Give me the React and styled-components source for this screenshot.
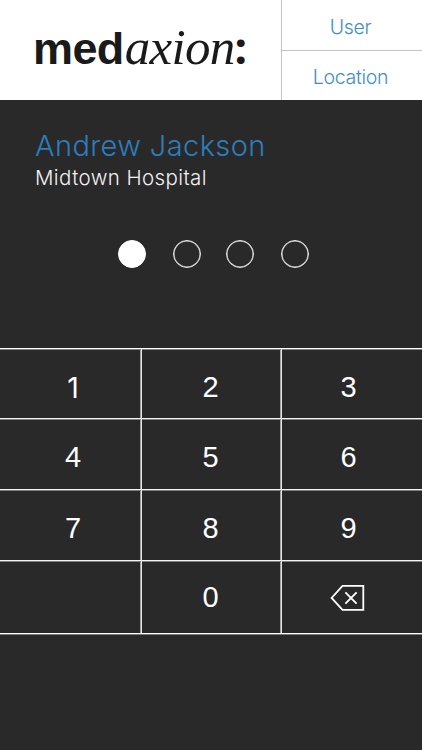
import React from "react";
import styled, { createGlobalStyle } from "styled-components";

const keys = ["1", "2", "3", "4", "5", "6", "7", "8", "9", "", "0", "delete"];

const App = () => {
  return (
    <>
      <GlobalStyle />
      <Screen>
        <Header>
          <Logo>
            <LogoBold>med</LogoBold>
            <LogoItalic>axion</LogoItalic>
            <LogoColon>:</LogoColon>
          </Logo>
          <Nav>
            <NavButton>User</NavButton>
            <NavButton>Location</NavButton>
          </Nav>
        </Header>
        <Profile>
          <Name>Andrew Jackson</Name>
          <Hospital>Midtown Hospital</Hospital>
        </Profile>
        <Pin>
          <Dot $filled />
          <Dot />
          <Dot />
          <Dot />
        </Pin>
        <Keypad>
          {keys.map((key, i) => (
            <Key key={i} aria-label={key || undefined}>
              {key === "delete" ? <DeleteIcon /> : key}
            </Key>
          ))}
        </Keypad>
      </Screen>
    </>
  );
};

export default App;

const DeleteIcon = () => (
  <svg width="36" height="28" viewBox="0 0 36 28" fill="none" stroke="#fff">
    <path d="M12.5 1.9H33.3V25.9H12.5L1.6 13.9Z" strokeWidth="1.8" />
    <path d="M15.4 8.4L26.6 19.6M26.6 8.4L15.4 19.6" strokeWidth="1.9" />
  </svg>
);

const GlobalStyle = createGlobalStyle`
  * {
    box-sizing: border-box;
  }

  body {
    margin: 0;
    background: #292929;
    font-family: "Liberation Sans", Arial, sans-serif;
  }

  button {
    padding: 0;
    border: 0;
    background: none;
    font-family: inherit;
  }
`;

const Screen = styled.div`
  width: 422px;
  height: 750px;
  overflow: hidden;
  display: flex;
  flex-direction: column;
  background: #292929;
`;

const Header = styled.header`
  height: 100px;
  display: flex;
  background: #fff;
`;

const Logo = styled.div`
  width: 281px;
  height: 100px;
  padding: 16px 0 0 33px;
  display: flex;
  align-items: baseline;
  color: #1a1a1a;
  line-height: 60px;
`;

const LogoBold = styled.span`
  font-size: 45px;
  font-weight: 700;
  letter-spacing: -0.6px;
`;

const LogoItalic = styled.span`
  margin-left: 1px;
  font-family: "Liberation Serif", "Times New Roman", serif;
  font-size: 51px;
  font-style: italic;
  letter-spacing: -0.7px;
`;

const LogoColon = styled.span`
  font-family: Lato, sans-serif;
  font-size: 48px;
  font-weight: 900;
`;

const Nav = styled.nav`
  flex: 1;
  display: flex;
  flex-direction: column;
  border-left: 1px solid #c4c4c4;
`;

const NavButton = styled.button`
  flex: 1;
  padding: 4px 3px 0 0;
  color: #3f8ec6;
  font-family: Inter, sans-serif;
  font-size: 19.5px;
  font-weight: 300;
  letter-spacing: -0.3px;

  & + & {
    padding-top: 3px;
    border-top: 1px solid #c4c4c4;
  }
`;

const Profile = styled.section`
  height: 139px;
  padding: 28px 0 0 35px;
  font-family: Inter, sans-serif;
  font-weight: 300;
  white-space: nowrap;
`;

const Name = styled.div`
  color: #2d7dbb;
  font-size: 29px;
  line-height: 36px;
  letter-spacing: 0.4px;
`;

const Hospital = styled.div`
  color: #f2f2f2;
  font-size: 20.5px;
  line-height: 28px;
  letter-spacing: 0.4px;
`;

const Pin = styled.div`
  height: 109px;
  padding: 1px 0 0 118px;
  display: grid;
  grid-template-columns: 55px 53px 55px 28px;
`;

const Dot = styled.span`
  width: 28px;
  height: 28px;
  border: 1px solid ${({ $filled }) => ($filled ? "#fff" : "#e8e8e8")};
  border-radius: 50%;
  background: ${({ $filled }) => ($filled ? "#fff" : "transparent")};
  box-shadow: inset 0 0 0 0.5px ${({ $filled }) => ($filled ? "#fff" : "#e8e8e8")};
`;

const Keypad = styled.div`
  display: grid;
  grid-template-columns: 142px 140px 140px;
  grid-template-rows: 70px 71px 71px 72px;
  border-top: 1px solid #fff;
  border-bottom: 1px solid #fff;
  box-shadow: 0 1px #7a7a7a;
`;

const Key = styled.button`
  display: flex;
  align-items: center;
  justify-content: center;
  padding-right: 2px;
  color: #fff;
  font-size: 29px;
  box-shadow: inset 0 1px #808080;

  &:nth-child(3n + 1) {
    padding: 0 0 0 5px;
  }

  &:nth-child(3n) {
    padding-right: 7px;
  }

  &:nth-child(12) {
    padding: 2px 8px 0 0;
  }

  &:not(:nth-child(3n)) {
    border-right: 1px solid #e6e6e6;
    box-shadow: inset 0 1px #808080, inset -1px 0 #a0a0a0;
  }

  &:nth-child(-n + 9) {
    padding-top: 7px;
    border-bottom: 1px solid #f4f4f4;
  }

  /* Inter draws the 1 without a foot */
  &:first-child {
    font-family: Inter, sans-serif;
    font-size: 28.5px;
  }
`;
